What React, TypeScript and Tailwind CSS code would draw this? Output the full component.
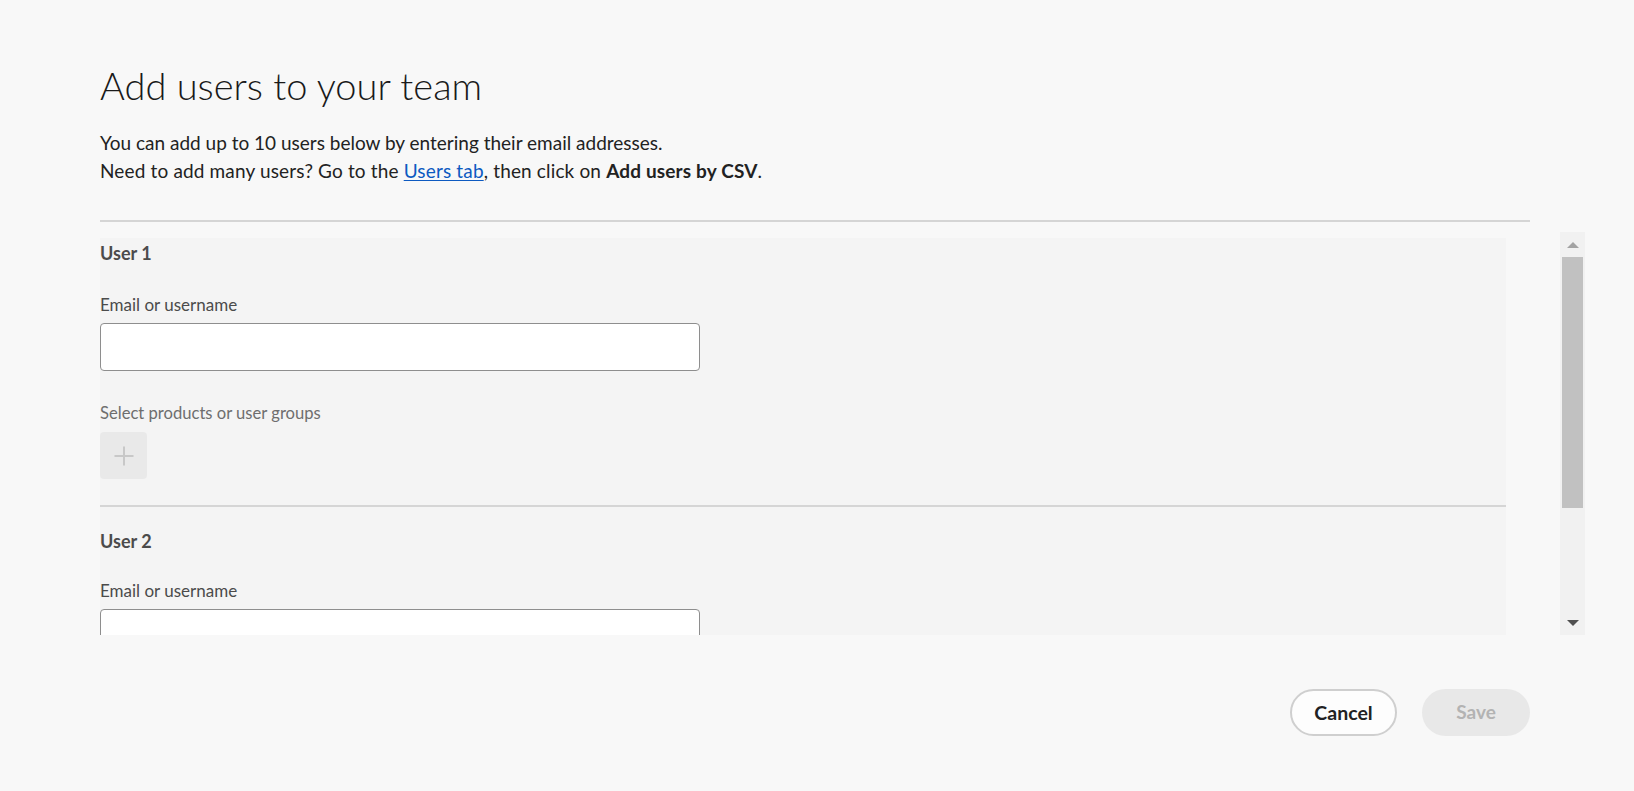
const users = [1, 2];

function Scrollbar() {
  return (
    <div className="flex h-full w-[25px] shrink-0 flex-col items-center bg-[#f1f1f1]">
      <div className="flex h-[25px] items-center justify-center">
        <span className="h-0 w-0 border-x-[6px] border-b-[6px] border-x-transparent border-b-[#a3a3a3]" />
      </div>
      <div className="h-[251px] w-[21px] bg-[#c1c1c1]" />
      <div className="flex-1" />
      <div className="flex h-[25px] items-center justify-center">
        <span className="h-0 w-0 border-x-[6px] border-t-[6px] border-x-transparent border-t-[#505050]" />
      </div>
    </div>
  );
}

function UserBlock({ n, first }: { n: number; first: boolean }) {
  return (
    <div className={first ? "pt-[3px] pb-[26px]" : "border-t-2 border-[#d5d5d5] pt-[22px] pb-[26px]"}>
      <div className="text-[18px] leading-[24px] font-bold text-[#4b4b4b]">User {n}</div>
      <div className={(first ? "mt-[30px]" : "mt-[28px]") + " text-[17px] leading-[20px] text-[#4b4b4b]"}>
        Email or username
      </div>
      <input
        type="text"
        className="mt-[8px] block h-[48px] w-[600px] rounded-[4px] border border-[#8e8e8e] bg-white px-3 outline-none"
      />
      <div className="mt-[32px] text-[16.6px] leading-[20px] text-[#6e6e6e]">Select products or user groups</div>
      <div className="mt-[9px] flex h-[47px] w-[47px] items-center justify-center rounded-[4px] bg-[#e9e9e9]">
        <svg width="20" height="20" viewBox="0 0 20 20" aria-hidden="true">
          <rect x="9" y="0.5" width="2" height="19" fill="#c8c8c8" />
          <rect x="0.5" y="9" width="19" height="2" fill="#c8c8c8" />
        </svg>
      </div>
    </div>
  );
}

export default function App() {
  return (
    <div className="h-[791px] w-[1634px] overflow-hidden bg-[#f8f8f8] font-['Lato',sans-serif] text-[#2c2c2c]">
      <div className="w-[1585px] pl-[100px] pt-[61px]">
        <h1 className="text-[38px] leading-[48px] font-light text-[#1a1a1a]">Add users to your team</h1>
        <div className="mt-[20px] text-[19px] leading-[28px] text-[#222]">
          <p>You can add up to 10 users below by entering their email addresses.</p>
          <p className="tracking-[0.15px]">
            Need to add many users? Go to the{" "}
            <a href="#" className="text-[#0d5ac1] underline underline-offset-2">
              Users tab
            </a>
            , then click on <span className="font-bold">Add users by CSV</span>.
          </p>
        </div>
        <div className="mt-[35px] h-[2px] w-[1430px] bg-[#d5d5d5]" />
        <div className="mt-[10px] flex h-[403px] justify-between">
          <div className="mt-[6px] w-[1406px] overflow-hidden bg-[#f4f4f4]">
            {users.map((n, i) => (
              <UserBlock key={n} n={n} first={i === 0} />
            ))}
          </div>
          <Scrollbar />
        </div>
        <div className="mt-[54px] flex w-[1430px] justify-end gap-[25px]">
          <button className="h-[47px] w-[107px] rounded-full border-2 border-[#cfcfcf] bg-[#fdfdfd] text-[19.5px] font-bold text-[#222]">
            Cancel
          </button>
          <button className="h-[47px] w-[108px] rounded-full bg-[#e8e8e8] text-[19px] font-bold text-[#b3b3b3]">
            Save
          </button>
        </div>
      </div>
    </div>
  );
}
